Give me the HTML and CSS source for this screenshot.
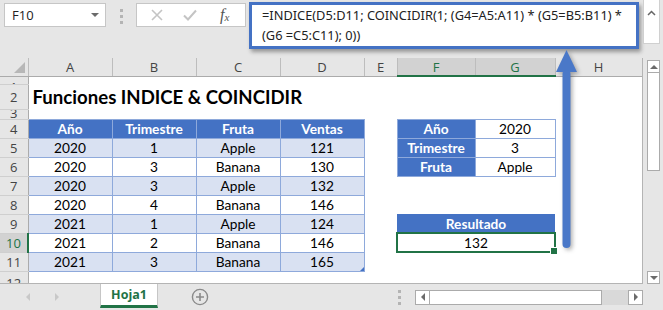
FILE: index.html
```html
<!DOCTYPE html>
<html lang="es">
<head>
    <meta charset="UTF-8">
    <meta name="viewport" content="width=device-width, initial-scale=1.0">
    <title>Funciones INDICE & COINCIDIR</title>
    <link rel="stylesheet" href="styles.css">
</head>
<body>

<div class="app">

    <!-- Barra de fórmulas -->
    <div class="topbar">
        <div class="namebox">
            <span>F10</span>
            <span class="caret-down"></span>
        </div>
        <div class="grip"><i></i><i></i><i></i></div>
        <div class="fx-buttons">
            <svg class="icon-x" width="12" height="12" viewBox="0 0 12 12">
                <path d="M1 1 L11 11 M11 1 L1 11" stroke="#c4c4c4" stroke-width="1.6" fill="none"/>
            </svg>
            <svg class="icon-ok" width="14" height="12" viewBox="0 0 14 12">
                <path d="M1 6.5 L5 10.5 L13 1.5" stroke="#c4c4c4" stroke-width="2" fill="none"/>
            </svg>
            <span class="icon-fx">f<sub>x</sub></span>
        </div>
        <div class="formula">=INDICE(D5:D11; COINCIDIR(1; (G4=A5:A11) * (G5=B5:B11) *<br>(G6 =C5:C11); 0))</div>
        <div class="expand">
            <svg width="9" height="6" viewBox="0 0 9 6">
                <path d="M1 5 L4.5 1.5 L8 5" stroke="#666" stroke-width="1.5" fill="none"/>
            </svg>
        </div>
    </div>

    <!-- Hoja -->
    <div class="sheet-area">
        <div class="grid">
            <table class="sheet">
                <colgroup>
                    <col class="c-hdr"><col class="c-a"><col class="c-b"><col class="c-c"><col class="c-d">
                    <col class="c-e"><col class="c-f"><col class="c-g"><col class="c-h">
                </colgroup>
                <tr class="r-head">
                    <th class="corner"><span class="corner-tri"></span></th>
                    <th>A</th><th>B</th><th>C</th><th>D</th><th>E</th>
                    <th class="sel">F</th><th class="sel">G</th><th>H</th>
                </tr>
                <tr class="r-1">
                    <th class="rn"><div class="clip">1</div></th>
                    <td></td><td></td><td></td><td></td><td></td><td></td><td></td><td></td>
                </tr>
                <tr class="r-2">
                    <th class="rn">2</th>
                    <td class="title"><span>Funciones INDICE &amp; COINCIDIR</span></td>
                    <td></td><td></td><td></td><td></td><td></td><td></td><td></td>
                </tr>
                <tr class="r-3">
                    <th class="rn"><div class="clip">3</div></th>
                    <td></td><td></td><td></td><td></td><td></td><td></td><td></td><td></td>
                </tr>
                <tr class="r-data">
                    <th class="rn">4</th>
                    <td class="hd">Año</td><td class="hd">Trimestre</td><td class="hd">Fruta</td><td class="hd">Ventas</td>
                    <td></td>
                    <td class="hd">Año</td><td class="val">2020</td>
                    <td></td>
                </tr>
                <tr class="r-data">
                    <th class="rn">5</th>
                    <td class="band">2020</td><td class="band">1</td><td class="band">Apple</td><td class="band">121</td>
                    <td></td>
                    <td class="hd">Trimestre</td><td class="val">3</td>
                    <td></td>
                </tr>
                <tr class="r-data">
                    <th class="rn">6</th>
                    <td class="plain">2020</td><td class="plain">3</td><td class="plain">Banana</td><td class="plain">130</td>
                    <td></td>
                    <td class="hd">Fruta</td><td class="val">Apple</td>
                    <td></td>
                </tr>
                <tr class="r-data">
                    <th class="rn">7</th>
                    <td class="band">2020</td><td class="band">3</td><td class="band">Apple</td><td class="band">132</td>
                    <td></td><td></td><td></td><td></td>
                </tr>
                <tr class="r-data">
                    <th class="rn">8</th>
                    <td class="plain">2020</td><td class="plain">4</td><td class="plain">Banana</td><td class="plain">146</td>
                    <td></td><td></td><td></td><td></td>
                </tr>
                <tr class="r-data">
                    <th class="rn">9</th>
                    <td class="band">2021</td><td class="band">1</td><td class="band">Apple</td><td class="band">124</td>
                    <td></td>
                    <td class="result-hd" colspan="2">Resultado</td>
                    <td></td>
                </tr>
                <tr class="r-data">
                    <th class="rn active">10</th>
                    <td class="plain">2021</td><td class="plain">2</td><td class="plain">Banana</td><td class="plain">146</td>
                    <td></td>
                    <td class="result" colspan="2">132<span class="cursor"></span></td>
                    <td></td>
                </tr>
                <tr class="r-data">
                    <th class="rn">11</th>
                    <td class="band">2021</td><td class="band">3</td><td class="band">Banana</td><td class="band last">165</td>
                    <td></td><td></td><td></td><td></td>
                </tr>
                <tr class="r-12">
                    <th class="rn"><div class="clip top">12</div></th>
                    <td></td><td></td><td></td><td></td><td></td><td></td><td></td><td></td>
                </tr>
            </table>
        </div>

        <div class="vscroll">
            <div class="sbtn"><span class="tri-up"></span></div>
            <div class="vthumb"></div>
            <div class="vtrack"></div>
            <div class="sbtn"><span class="tri-down"></span></div>
        </div>
    </div>

    <!-- Pestañas -->
    <div class="tabbar">
        <div class="nav">
            <span class="tri-left"></span>
            <span class="tri-right"></span>
        </div>
        <div class="tab">Hoja1</div>
        <svg class="add" width="18" height="18" viewBox="0 0 18 18">
            <circle cx="9" cy="9" r="7.6" stroke="#8a8a8a" stroke-width="1.4" fill="none"/>
            <path d="M9 5 V13 M5 9 H13" stroke="#8a8a8a" stroke-width="1.6"/>
        </svg>
        <div class="grip hgrip"><i></i><i></i><i></i></div>
        <div class="hscroll">
            <div class="sbtn"><span class="tri-left dark"></span></div>
            <div class="hthumb"></div>
            <div class="htrack"></div>
            <div class="sbtn"><span class="tri-right dark"></span></div>
        </div>
    </div>

    <!-- Flecha de la anotación -->
    <svg class="arrow" width="26" height="204" viewBox="0 0 26 204">
        <path d="M12.5 2 L23 24 L2 24 Z" fill="#4a78c8"/>
        <rect x="8.5" y="22" width="8" height="178" rx="4" fill="#4a78c8"/>
    </svg>

</div>

</body>
</html>
```

FILE: styles.css
```css
* {
    box-sizing: border-box;
}

body {
    margin: 0;
    background-color: #e6e6e6;
    font-family: "Open Sans", sans-serif;
    color: #222;
}

.app {
    position: relative;
    width: 663px;
    height: 310px;
    overflow: hidden;
}

/* ---------- barra de fórmulas ---------- */

.topbar {
    display: flex;
    align-items: flex-start;
    height: 58px;
    padding-top: 3px;
    padding-left: 4px;
}

.namebox {
    width: 102px;
    height: 24px;
    background: #fff;
    border: 1px solid #c6c6c6;
    display: flex;
    align-items: center;
    justify-content: space-between;
    padding: 0 6px 0 7px;
    font-size: 13px;
    color: #222;
}

.caret-down {
    width: 0;
    height: 0;
    border-left: 4px solid transparent;
    border-right: 4px solid transparent;
    border-top: 4px solid #6b6b6b;
}

.grip {
    display: flex;
    flex-direction: column;
    gap: 3px;
    width: 3px;
    margin: 6px 13px 0 14px;
}

.grip i {
    display: block;
    width: 3px;
    height: 3px;
    background: #b4b4b4;
}

.fx-buttons {
    width: 110px;
    height: 24px;
    background: #fff;
    border: 1px solid #c6c6c6;
    display: flex;
    align-items: center;
    padding-left: 14px;
}

.icon-ok {
    margin-left: 20px;
}

.icon-fx {
    margin-left: 23px;
    font-family: "Liberation Serif", serif;
    font-style: italic;
    font-size: 16px;
    color: #555;
    line-height: 1;
}

.icon-fx sub {
    font-size: 11px;
    vertical-align: -1px;
}

.formula {
    width: 390px;
    height: 47px;
    margin-top: -1px;
    margin-left: 3px;
    background: #fff;
    border: 3px solid #4472c4;
    box-shadow: 2px 3px 4px rgba(0, 0, 0, 0.35);
    padding-left: 10px;
    font-family: "Noto Sans", sans-serif;
    font-size: 12.8px;
    line-height: 20px;
    color: #222;
    white-space: nowrap;
}

.expand {
    width: 17px;
    height: 44px;
    margin-top: -3px;
    margin-left: 4px;
    background: #fff;
    border: 1px solid #d0d0d0;
    border-top: none;
    display: flex;
    justify-content: center;
    padding-top: 10px;
}

/* ---------- hoja ---------- */

.sheet-area {
    display: flex;
    height: 226px;
}

.grid {
    width: 643px;
    height: 226px;
    background: #fff;
    border-right: 1px solid #b4b4b4;
    border-bottom: 1px solid #b4b4b4;
    overflow: hidden;
}

.sheet {
    width: 642px;
    table-layout: fixed;
    border-collapse: collapse;
    font-family: Lato, sans-serif;
    font-size: 13.7px;
    color: #000;
}

.c-hdr { width: 28px; }
.c-a, .c-b, .c-c, .c-d { width: 84px; }
.c-e { width: 33px; }
.c-f { width: 78px; }
.c-g { width: 80px; }
.c-h { width: 87px; }

.sheet th,
.sheet td {
    padding: 0;
    text-align: center;
    vertical-align: middle;
    overflow: visible;
    white-space: nowrap;
}

.r-head th {
    height: 18px;
    background: #e6e6e6;
    border-right: 1px solid #bdbdbd;
    border-bottom: 1px solid #ababab;
    font-family: "Open Sans", sans-serif;
    font-weight: normal;
    font-size: 13px;
    color: #444;
    line-height: 16px;
}

.r-head th.sel {
    background: #d2d2d2;
    color: #217346;
    border-bottom: 2px solid #217346;
}

.corner {
    position: relative;
}

.corner-tri {
    position: absolute;
    right: 3px;
    bottom: 3px;
    width: 0;
    height: 0;
    border-left: 11px solid transparent;
    border-bottom: 11px solid #b7b7b7;
}

.rn {
    background: #e6e6e6;
    border-right: 1px solid #ababab;
    border-bottom: 1px solid #cfcfcf;
    font-family: "Open Sans", sans-serif;
    font-weight: normal;
    font-size: 13px;
    color: #444;
    line-height: 16px;
}

.rn.active {
    background: #d2d2d2;
    color: #217346;
    border-right: 2px solid #217346;
}

.clip {
    overflow: hidden;
    line-height: 16px;
}

.r-1 th, .r-1 td { height: 8px; }
.r-1 .clip { height: 7px; line-height: 20px; }
.r-2 th, .r-2 td { height: 25px; }
.r-3 th, .r-3 td { height: 10px; }
.r-3 .clip { height: 9px; line-height: 6px; }
.r-data th, .r-data td { height: 19px; }
.r-12 th, .r-12 td { height: 13px; }
.r-12 .clip { height: 12px; line-height: 22px; }

.title {
    text-align: left !important;
    vertical-align: bottom !important;
    padding: 0 0 1px 4px !important;
}

.title span {
    font-weight: bold;
    font-size: 18.6px;
}

.hd {
    background: #4472c4;
    color: #fff;
    font-weight: bold;
    border: 1px solid #8ea9db;
}

.band {
    background: #d9e1f2;
    border: 1px solid #8ea9db;
}

.plain,
.val {
    border: 1px solid #8ea9db;
}

.last {
    position: relative;
}

.last::after {
    content: "";
    position: absolute;
    right: 0;
    bottom: 0;
    width: 0;
    height: 0;
    border-left: 4px solid transparent;
    border-bottom: 4px solid #4472c4;
}

.result-hd {
    background: #4472c4;
    color: #fff;
    font-weight: bold;
}

.result {
    position: relative;
}

.cursor {
    position: absolute;
    left: -1px;
    top: -1px;
    right: -1px;
    bottom: -1px;
    border: 2px solid #217346;
}

.cursor::after {
    content: "";
    position: absolute;
    right: -4px;
    bottom: -4px;
    width: 6px;
    height: 6px;
    background: #217346;
    border: 1px solid #fff;
}

/* ---------- barras de desplazamiento ---------- */

.vscroll {
    width: 20px;
    padding: 2px 3px 0 4px;
    display: flex;
    flex-direction: column;
}

.sbtn {
    width: 13px;
    height: 13px;
    background: #fff;
    border: 1px solid #ababab;
    display: flex;
    align-items: center;
    justify-content: center;
    flex: none;
}

.vthumb {
    height: 98px;
    background: #fff;
    border: 1px solid #ababab;
    border-top: none;
}

.vtrack {
    flex: 1;
}

.tri-up,
.tri-down {
    width: 0;
    height: 0;
    border-left: 4px solid transparent;
    border-right: 4px solid transparent;
}

.tri-up { border-bottom: 4px solid #6b6b6b; }
.tri-down { border-top: 4px solid #6b6b6b; }

.tri-left,
.tri-right {
    width: 0;
    height: 0;
    border-top: 4px solid transparent;
    border-bottom: 4px solid transparent;
}

.tri-left { border-right: 4px solid #c8c8c8; }
.tri-right { border-left: 4px solid #c8c8c8; }
.tri-left.dark { border-right-color: #6b6b6b; }
.tri-right.dark { border-left-color: #6b6b6b; }

/* ---------- pestañas ---------- */

.tabbar {
    display: flex;
    align-items: center;
    height: 26px;
}

.nav {
    width: 100px;
    display: flex;
    align-items: center;
    gap: 25px;
    padding-left: 26px;
}

.tab {
    align-self: flex-start;
    width: 58px;
    height: 24px;
    background: #fff;
    border-left: 1px solid #c6c6c6;
    border-right: 1px solid #c6c6c6;
    border-bottom: 3px solid #217346;
    text-align: center;
    font-weight: bold;
    font-size: 12.5px;
    line-height: 21px;
    color: #217346;
}

.add {
    margin-left: 33px;
}

.hgrip {
    margin: 0 14px 0 189px;
}

.hscroll {
    display: flex;
    width: 228px;
    height: 15px;
}

.hscroll .sbtn {
    width: 15px;
    height: 15px;
}

.hthumb {
    width: 172px;
    background: #fff;
    border: 1px solid #ababab;
    border-left: none;
}

.htrack {
    flex: 1;
    background: #d9d9d9;
}

/* ---------- flecha ---------- */

.arrow {
    position: absolute;
    left: 554px;
    top: 48px;
    filter: drop-shadow(2px 2px 2px rgba(0, 0, 0, 0.3));
}
```
